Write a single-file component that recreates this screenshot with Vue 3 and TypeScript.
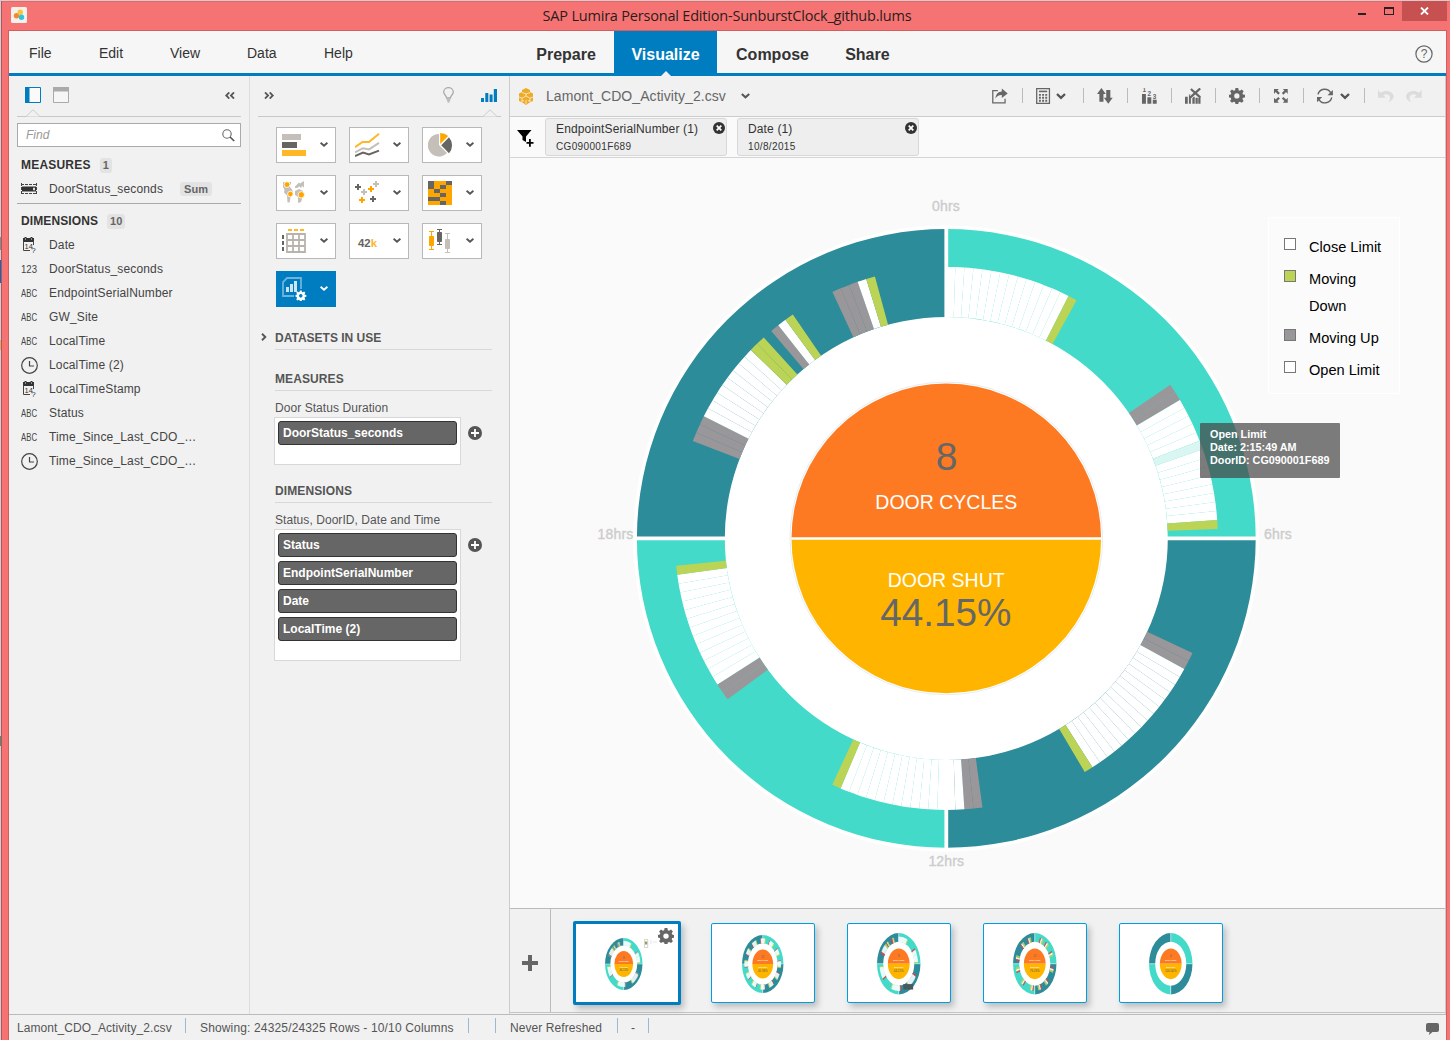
<script setup lang="ts">
type Part = [color: string, count: number]
interface Group { start: number; parts: Part[] }
interface Slice { d: string; fill: string }

const R_OUT = 309.4
const R_IN = 221.5
const R_EVENT = 271.5
const STEP = 1.911

const GRAY = '#999799'
const GREEN = '#bcd456'
const WHITE = '#ffffff'
const RED = '#d8474a'
const TEAL = '#43dac9'
const DEEP = '#2d8c9a'

function point(r: number, deg: number): string {
  const a = (deg * Math.PI) / 180
  return `${(r * Math.sin(a)).toFixed(2)} ${(-r * Math.cos(a)).toFixed(2)}`
}

function arc(r0: number, r1: number, from: number, to: number): string {
  return `M${point(r1, from)}A${r1} ${r1} 0 0 1 ${point(r1, to)}L${point(r0, to)}A${r0} ${r0} 0 0 0 ${point(r0, from)}Z`
}

function slices(groups: Group[]): Slice[] {
  const out: Slice[] = []
  for (const g of groups) {
    let a = g.start
    for (const [fill, count] of g.parts) {
      for (let i = 0; i < count; i++) {
        out.push({ d: arc(R_IN, R_EVENT, a, a + STEP), fill })
        a += STEP
      }
    }
  }
  return out
}

const quadrants: Slice[] = [TEAL, DEEP, TEAL, DEEP].map((fill, i) => ({
  d: arc(R_IN, R_OUT, i * 90, i * 90 + 90),
  fill,
}))

const dayGroups: Group[] = [
  { start: 0, parts: [[WHITE, 14], [GREEN, 1]] },
  { start: 55.55, parts: [[GRAY, 2], [WHITE, 5], ['#d9f6f2', 1], [WHITE, 8], [GREEN, 1]] },
  { start: 114.95, parts: [[GRAY, 2], [WHITE, 15], [GREEN, 1]] },
  { start: 172.35, parts: [[GRAY, 2], [WHITE, 14], [GREEN, 1]] },
  { start: 233.65, parts: [[GRAY, 2], [WHITE, 13], [GREEN, 1]] },
  { start: 291.0, parts: [[GRAY, 3], [WHITE, 9], [GREEN, 2]] },
  { start: 319.85, parts: [[GRAY, 1], [WHITE, 1], [GREEN, 1]] },
  { start: 335.2, parts: [[GRAY, 3], [WHITE, 1], [GREEN, 1]] },
]
const daySlices = slices(dayGroups)

const busy: Group[] = Array.from({ length: 12 }, (_, i) => ({
  start: i * 30 - 8,
  parts: [[RED, 1], [WHITE, 7], [GREEN, 1]] as Part[],
}))
const redDay: Group[] = dayGroups.map((g) => ({
  start: g.start,
  parts: g.parts.map(([c, n]): Part => [c === GRAY ? RED : c, n]),
}))
const stripes: Group[] = [16, 36, 62, 98, 132, 158, 184, 216, 250, 277, 312, 336].map((start) => ({
  start,
  parts: [[RED, 2], [WHITE, 2], [GREEN, 2]] as Part[],
}))

const thumbs = [
  { x: 29, y: 14, w: 37.5, h: 52, cycles: '8', shut: '44.15%', slices: daySlices },
  { x: 30, y: 11, w: 41.5, h: 58, cycles: '12', shut: '45.93%', slices: slices(busy) },
  { x: 29, y: 9, w: 43.5, h: 61.5, cycles: '8', shut: '44.15%', slices: slices(redDay) },
  { x: 29, y: 9, w: 43.5, h: 61.5, cycles: '12', shut: '76.26%', slices: slices(stripes) },
  { x: 29, y: 9, w: 43.5, h: 61.5, cycles: '0', shut: '100.00%', slices: [] as Slice[] },
]

const gearPath =
  'M6.6 0h2.8l.4 2.2 1.3.5 1.9-1.2 1.9 1.9-1.2 1.9.5 1.3 2.2.4v2.6l-2.2.4-.5 1.3 1.2 1.9-1.9 1.9-1.9-1.2-1.3.5-.4 2.2H6.6l-.4-2.2-1.3-.5L3 15.1l-1.9-1.9 1.2-1.9-.5-1.3L0 9.6V7l1.8-.4.5-1.3-1.2-1.9L3 1.5l1.9 1.2 1.3-.5zM8 5.4A2.7 2.7 0 1 0 8 10.8A2.7 2.7 0 1 0 8 5.4z'

const menus = ['File', 'Edit', 'View', 'Data', 'Help']
const rooms = ['Prepare', 'Visualize', 'Compose', 'Share']

const dimensions = [
  { kind: 'date', name: 'Date' },
  { kind: '123', name: 'DoorStatus_seconds' },
  { kind: 'ABC', name: 'EndpointSerialNumber' },
  { kind: 'ABC', name: 'GW_Site' },
  { kind: 'ABC', name: 'LocalTime' },
  { kind: 'time', name: 'LocalTime (2)' },
  { kind: 'date', name: 'LocalTimeStamp' },
  { kind: 'ABC', name: 'Status' },
  { kind: 'ABC', name: 'Time_Since_Last_CDO_…' },
  { kind: 'time', name: 'Time_Since_Last_CDO_…' },
]

const chartTypes: { id: string; art: string }[] = [
  { id: 'bar', art: '<path fill="#c4c0b9" d="M0 1h19v6H0z"/><path fill="#666561" d="M0 9h15v6H0z"/><path fill="#ffb627" d="M0 17h24v6H0z"/>' },
  { id: 'line', art: '<g fill="none" stroke-width="2"><path stroke="#ffb627" d="M0 14.3 7.5 9H14L24 .8"/><path stroke="#c4c0b9" d="M0 19.3 8 15.2 14 16.4 24 9.8"/><path stroke="#666561" d="M0 23 8 19.6 14 21.4 24 17.6"/></g>' },
  { id: 'pie', art: '<path fill="#c4c0b9" d="M11 1v11l8 8A11.2 11.2 0 1 1 11 1z"/><path fill="#ffa500" d="M12.2 0a12 12 0 0 1 8 3L12.2 11z"/><path fill="#666561" d="M21 4.2a12 12 0 0 1 0 16L13.2 12.2z"/>' },
  { id: 'map', art: '<path fill="#c4c0b9" d="M1 1h8v1.5l-1.5 3 2.5 3 1 3-2 3-1.5 7H5.5l-.5-7-3-3 .5-3L1 6zM13 5.5l4-4 1 1 4-2.5v6.5l-2-1.5-1 2-1.5-1.5L15 7h-2zM13 10l4-2 4 2v5l-2 6-3 1v-6l-3-2z"/><g fill="#ffa500" stroke="#fff" stroke-width=".8"><circle cx="5" cy="3.6" r="2.9"/><circle cx="8.4" cy="13" r="2.8"/><circle cx="19.3" cy="13.8" r="3.2"/></g>' },
  { id: 'scatter', art: '<g stroke-width="2"><path stroke="#666561" d="M0 6h6M3 3v6M15 18h6M18 15v6"/><path stroke="#c4c0b9" d="M18 3h6M21 0v6M6 11h6M9 8v6"/><path stroke="#ffa500" d="M13 8h6M16 5v6M4 19h6M7 16v6"/></g>' },
  { id: 'heat', art: '<path fill="#ffa500" d="M0 0h24v24H0z"/><path fill="#666561" d="M0 0h6v8H0zM18 0h6v4h-6zM12 4h6v4h-6zM6 8h6v4H6zM12 12h6v4h-6zM0 16h12v4H0zM12 20h6v4h-6z"/>' },
  { id: 'table', art: '<path fill="#ffb627" d="M6 0h4v2H6zM12 0h4v2h-4zM18 0h4v2h-4z"/><path fill="#666561" d="M0 6h2v4H0zM0 12h2v4H0zM0 18h2v4H0z"/><path fill="none" stroke="#b9b3ac" stroke-width="1.8" d="M5 5h18v18H5zM5 11h18M5 17h18M11 5v18M17 5v18"/>' },
  { id: 'number', art: '<text x="3" y="17.5" font-family="Liberation Sans,Arial,sans-serif" font-weight="bold" font-size="11" textLength="19" lengthAdjust="spacingAndGlyphs" fill="#666561">42<tspan fill="#ffb627">k</tspan></text>' },
  { id: 'box', art: '<g stroke-width="1"><g fill="#ffa500" stroke="#ffa500"><path d="M1 2.5h5M3.5 2.5v18M1 20.5h5"/><path d="M1.5 7.5h4v9h-4z"/></g><g fill="#666561" stroke="#666561"><path d="M9 .5h5M11.5.5v15M9 15.5h5"/><path d="M9.5 3.5h4v9h-4z"/></g><g fill="#c4c0b9" stroke="#c4c0b9"><path d="M17 4.5h5M19.5 4.5v19M17 23.5h5"/><path d="M17.5 10.5h4v9h-4z"/></g></g>' },
  { id: 'custom', art: `<path fill="none" stroke="#6db3dc" stroke-width="1.8" d="M12 19H1V5L5 1h14v11"/><path fill="#cde5f3" d="M4 10h3v5H4zM8 7h3v8H8zM12 4h3v11h-3z"/><g transform="translate(13.5,13.5) scale(.66)"><path fill="#fff" fill-rule="evenodd" d="${gearPath}"/></g>` },
]

const toolIcons: Record<string, string> = {
  share: '<path fill="none" stroke="#666" stroke-width="1.3" d="M6 2.7H.8v12.5h12.5V11"/><path fill="#666" d="M3.5 11C4 6 6.5 3.8 10 3.6V.5l6 5-6 4.8V7.2C7 7 5 8.2 3.5 11z"/>',
  calc: '<path fill="none" stroke="#666" stroke-width="1.3" d="M.7.7h13v15h-13z"/><path stroke="#666" stroke-width="1.6" d="M3 3.5h8.4"/><path stroke="#666" stroke-width="2" stroke-dasharray="2 1.2" d="M3 7h8.4M3 10h8.4M3 13h8.4"/>',
  sort: '<path fill="#666" d="M4.5 0 9 6H6.6v8H2.4V6H0zM11.5 16 16 10h-2.4V2H9.4v8H7z"/>',
  rank: '<path fill="#666" d="M1 6h4v10H1zM6.5 9.5h4V16h-4zM12 12h4v4h-4z"/><g fill="#666" font-family="Liberation Sans,Arial,sans-serif" font-size="6.5" font-weight="bold"><text x="1.5" y="4.5">1</text><text x="6.7" y="8">2</text><text x="12" y="11">3</text></g>',
  clear: '<path fill="#666" d="M0 9h2.8v7H0zM4 6.5h2V16H4zM7.5 9h2.4v7H7.5zM10.7 10H13v6h-2.3zM13.5 9h2.3v7h-2.3z"/><path stroke="#f1f1f1" stroke-width="4" d="M6 .5 15.5 9M15.5.5 6 9"/><path stroke="#666" stroke-width="2.3" d="M6 1 15.5 9.5M15.5.5 5.5 9.5"/>',
  gear: `<path fill="#666" fill-rule="evenodd" d="${gearPath}"/>`,
  expand: '<path fill="#666" d="M1 1h5L4.4 2.6 7 5.2 5.4 6.8 2.7 4.2 1 6zM15 1v5l-1.7-1.8-2.7 2.6L9 5.2l2.6-2.6L10 1zM1 15v-5l1.7 1.7 2.7-2.6L7 10.7l-2.6 2.6L6 15zM15 15h-5l1.6-1.7L9 10.7l1.6-1.6 2.7 2.6L15 10z"/>',
  refresh: '<path fill="none" stroke="#666" stroke-width="1.5" d="M1 6.5A7 7 0 0 1 14 5M15 9.5A7 7 0 0 1 2 11.5"/><path fill="#666" d="M16.2 2v5.5h-5.5zM0 14.5V9.2h5.3z"/>',
  undo: '<path fill="#dcdcdc" d="M0 2v8h8L5.3 7.3C9 5 12.5 7 12.3 10.5c0 1.7-1 3-2.3 4 4-1 6-3.5 6-6C15.5 3.5 8 1 2.8 4.8z"/>',
  redo: '<path fill="#dcdcdc" d="M16 2v8H8l2.7-2.7C7 5 3.5 7 3.7 10.5c0 1.7 1 3 2.3 4-4-1-6-3.5-6-6C.5 3.5 8 1 13.2 4.8z"/>',
}
const tools = [['share'], ['calc', 'menu'], ['sort'], ['rank'], ['clear'], ['gear'], ['expand'], ['refresh', 'menu'], ['undo', 'redo']]

const filters = [
  { name: 'EndpointSerialNumber', value: 'CG090001F689' },
  { name: 'Date', value: '10/8/2015' },
]
const legend = [
  { label: 'Close Limit', color: '#fff' },
  { label: 'Moving Down', color: GREEN },
  { label: 'Moving Up', color: GRAY },
  { label: 'Open Limit', color: '#fff' },
]
const dimensionPills = ['Status', 'EndpointSerialNumber', 'Date', 'LocalTime (2)']
</script>

<template>
  <div class="window">
    <header class="titlebar">
      <svg class="app-icon" width="16" height="16" viewBox="0 0 16 16">
        <rect width="16" height="16" rx="1.5" fill="#f4f0ec" />
        <circle cx="5.5" cy="8.8" r="2.7" fill="#ee8b32" />
        <circle cx="9.2" cy="5.3" r="2.7" fill="#f9c33c" />
        <circle cx="10.5" cy="10.2" r="2.7" fill="#2fc3dc" />
      </svg>
      <span class="title">SAP Lumira Personal Edition-SunburstClock_github.lums</span>
      <div class="win-buttons">
        <i class="minimize"></i>
        <i class="maximize"></i>
        <span class="close">
          <svg width="9" height="8" viewBox="0 0 9 8"><path d="M1 .5 8 7.5M8 .5 1 7.5" stroke="#fff" stroke-width="1.8" /></svg>
        </span>
      </div>
    </header>

    <div class="client">
      <nav class="menubar">
        <div class="menus"><span v-for="m in menus" :key="m" :class="m.toLowerCase()">{{ m }}</span></div>
        <div class="rooms">
          <span v-for="r in rooms" :key="r" :class="{ active: r === 'Visualize' }">{{ r }}</span>
        </div>
        <svg class="help-icon" width="18" height="18" viewBox="0 0 18 18">
          <circle cx="9" cy="9" r="8.1" fill="none" stroke="#666" stroke-width="1.2" />
          <text x="9" y="13.3" text-anchor="middle" font-size="12" fill="#666">?</text>
        </svg>
      </nav>

      <div class="body">
        <aside class="objects">
          <div class="panel-head">
            <svg width="16" height="16" viewBox="0 0 16 16"><path fill="#fafafa" stroke="#007cc0" d="M.5.5h15v15H.5z" /><path fill="#007cc0" d="M0 0h4.5v16H0z" /></svg>
            <svg class="second" width="16" height="16" viewBox="0 0 16 16"><path fill="#f6f6f6" stroke="#aaa" d="M.5.5h15v15H.5z" /><path fill="#aaa" d="M0 0h16v4.5H0z" /></svg>
            <svg class="collapse" width="10" height="7" viewBox="0 0 10 7"><path d="M4.3.4 1.2 3.5 4.3 6.6M9 .4 5.9 3.5 9 6.6" fill="none" stroke="#555" stroke-width="1.8" /></svg>
            <svg class="notch" width="14" height="8" viewBox="0 0 14 8"><path d="M0 7.5 7 .8 14 7.5" fill="#f1f1f1" stroke="#ccc" /></svg>
          </div>
          <div class="search">
            <em>Find</em>
            <svg width="13" height="13" viewBox="0 0 13 13"><circle cx="5" cy="5" r="4.2" fill="none" stroke="#666" stroke-width="1.1" /><path d="M8 8 12.2 12" stroke="#555" stroke-width="1.7" /></svg>
          </div>
          <h3 class="first">MEASURES <b>1</b></h3>
          <div class="row measure">
            <svg width="16" height="12" viewBox="0 0 16 12"><path d="M0 1.5h16M0 10.5h16M.5 0v12M15.5 0v12" stroke="#444" stroke-dasharray="3 1" /><path fill="#333" d="M1 3.5h14v5H1z" /><path fill="#ddd" d="M12 4.8h2v2.4h-2z" /></svg>
            <span>DoorStatus_seconds</span><small>Sum</small>
          </div>
          <h3>DIMENSIONS <b>10</b></h3>
          <div v-for="(d, i) in dimensions" :key="i" class="row">
            <svg v-if="d.kind === 'date'" width="16" height="16" viewBox="0 0 16 16">
              <path fill="#333" d="M2 1h11v4H2zM3.5 0h2v2h-2zM9.5 0h2v2h-2z" /><path fill="#eee" d="M4 1.5h1v1H4zM10 1.5h1v1h-1z" />
              <path fill="none" stroke="#444" d="M2.5 4v9.5H9M12.5 4v4" />
              <text x="3.5" y="12" font-size="7.5" fill="#333">14</text>
              <text x="10.3" y="15.5" font-size="8" fill="#333">?</text>
            </svg>
            <svg v-else-if="d.kind === 'time'" width="17" height="17" viewBox="0 0 17 17" class="clock">
              <circle cx="8.5" cy="8.5" r="7.8" fill="none" stroke="#444" stroke-width="1.2" /><path d="M8.5 4v5H13" fill="none" stroke="#444" stroke-width="1.2" />
            </svg>
            <svg v-else class="kind" width="28" height="20" viewBox="0 -4 28 20">
              <text x="0" y="10" font-size="11" fill="#444" textLength="16" lengthAdjust="spacingAndGlyphs">{{ d.kind }}</text>
            </svg>
            <span>{{ d.name }}</span>
          </div>
        </aside>

        <aside class="builder">
          <div class="panel-head">
            <svg class="expand" width="10" height="7" viewBox="0 0 10 7"><path d="M1 .4 4.1 3.5 1 6.6M5.7.4 8.8 3.5 5.7 6.6" fill="none" stroke="#555" stroke-width="1.8" /></svg>
            <svg class="bulb" width="11" height="16" viewBox="0 0 11 16"><path d="M3.6 11C3.6 8.5.7 8 .7 5a4.8 4.4 0 0 1 9.6 0C10.3 8 7.4 8.5 7.4 11zM3.8 13h3.4M4.5 14.9h2" fill="none" stroke="#aaa" stroke-width="1.3" /></svg>
            <svg width="16" height="13" viewBox="0 0 16 13"><path fill="#007cc0" d="M0 9h3v4H0zM4.3 4h3v9h-3zM8.6 5.5h3V13h-3zM12.8 0H16v13h-3.2z" /></svg>
            <svg class="notch" width="14" height="8" viewBox="0 0 14 8"><path d="M0 7.5 7 .8 14 7.5" fill="#f1f1f1" stroke="#ccc" /></svg>
          </div>
          <div class="types">
            <div v-for="t in chartTypes" :key="t.id" class="type" :class="t.id">
              <svg class="art" width="25" height="24" viewBox="0 0 25 24" v-html="t.art"></svg>
              <svg class="chev" width="8" height="5" viewBox="0 0 8 5"><path d="M.6.8 4 3.7 7.4.8" fill="none" stroke="currentColor" stroke-width="1.9" /></svg>
            </div>
          </div>
          <h4 class="datasets">
            <svg width="6" height="8" viewBox="0 0 6 8"><path d="M1 .8 4.3 4 1 7.2" fill="none" stroke="#555" stroke-width="1.9" /></svg>DATASETS IN USE
          </h4>
          <h4 class="sec-measures">MEASURES</h4>
          <p>Door Status Duration</p>
          <div class="feed">
            <div class="shelf one"><div class="pill">DoorStatus_seconds</div></div>
            <svg width="14" height="14" viewBox="0 0 14 14"><circle cx="7" cy="7" r="7" fill="#555" /><path d="M3 7h8M7 3v8" stroke="#fff" stroke-width="1.8" /></svg>
          </div>
          <h4 class="sec-dimensions">DIMENSIONS</h4>
          <p>Status, DoorID, Date and Time</p>
          <div class="feed">
            <div class="shelf many"><div v-for="p in dimensionPills" :key="p" class="pill">{{ p }}</div></div>
            <svg width="14" height="14" viewBox="0 0 14 14"><circle cx="7" cy="7" r="7" fill="#555" /><path d="M3 7h8M7 3v8" stroke="#fff" stroke-width="1.8" /></svg>
          </div>
        </aside>

        <main class="stage">
          <div class="toolbar">
            <svg width="16" height="17" viewBox="0 0 16 17" class="cube">
              <path fill="#eeab27" d="M8 0 12 2v2l3 1.5v7.5l-3 1.2L8 17l-4-2.8L1 13V5.5L4 4V2z" /><path d="M4 4.5 8 6l4-1.5M1 9l3 1.2L8 8l4 2.2L15 9M4 10.2V14M12 10.2V14M8 6v2M8 12v4M4 12.8h2M10 12.8h2" fill="none" stroke="#f8e9c9" stroke-width=".9" />
            </svg>
            <span class="dataset">Lamont_CDO_Activity_2.csv</span>
            <svg width="9" height="6" viewBox="0 0 9 6"><path d="M.8 1 4.5 4.3 8.2 1" fill="none" stroke="#555" stroke-width="2" /></svg>
            <div class="tools">
              <div v-for="(group, gi) in tools" :key="gi" class="tool" :class="group[0]">
                <template v-for="name in group" :key="name">
                  <svg v-if="name === 'menu'" class="tool-menu" width="10" height="7" viewBox="0 0 10 7"><path d="M1 1 5 4.8 9 1" fill="none" stroke="#555" stroke-width="2.4" /></svg>
                  <svg v-else width="16" height="16" viewBox="0 0 16.3 16.3" v-html="toolIcons[name]"></svg>
                </template>
              </div>
            </div>
          </div>

          <div class="filterbar">
            <svg width="17" height="17" viewBox="0 0 17 17"><path fill="#000" d="M0 0h14.5L9 6.5V12L5.5 10V6.5zM12 9h1.8v3H16.500v1.800h-2.700v3H12v-3H9.500V12H12z" /></svg>
            <div v-for="f in filters" :key="f.name" class="chip">
              <div class="chip-name">{{ f.name }} (1)</div>
              <div class="chip-value">{{ f.value }}</div>
              <svg width="12" height="12" viewBox="0 0 12 12"><circle cx="6" cy="6" r="6" fill="#333" /><path d="M3.7 3.7l4.6 4.6M8.3 3.7 3.7 8.3" stroke="#fff" stroke-width="1.8" /></svg>
            </div>
          </div>

          <div class="canvas">
            <svg width="935" height="750" viewBox="510 158 935 750">
              <g transform="translate(946.3 538.4)">
                <circle r="313" fill="#fff" />
                <path v-for="(q, i) in quadrants" :key="i" :d="q.d" :fill="q.fill" />
                <path d="M-313 0H313M0-313V313" stroke="#fff" stroke-width="3.8" />
                <path v-for="(s, i) in daySlices" :key="'s' + i" :d="s.d" :fill="s.fill" />
                <circle r="156.3" fill="none" stroke="#dfe9ec" stroke-width=".8" />
                <path fill="#fd7a22" d="M-154.8 0A154.8 154.8 0 0 1 154.8 0z" />
                <path fill="#ffb500" d="M-154.8 0A154.8 154.8 0 0 0 154.8 0z" />
                <path d="M-155 .1H155" stroke="#fff" stroke-width="2.4" />
              </g>
              <g text-anchor="middle">
                <g class="hours"><text x="946" y="211">0hrs</text><text x="1278" y="539">6hrs</text><text x="946.3" y="866">12hrs</text><text x="615.5" y="539">18hrs</text></g>
                <g fill="#666"><text x="946.5" y="469.5" font-size="39">8</text><text x="945.8" y="626" font-size="38.7">44.15%</text></g>
                <g fill="#fff" font-size="19.5"><text x="946.3" y="509">DOOR CYCLES</text><text x="946.2" y="587">DOOR SHUT</text></g>
              </g>
            </svg>
            <div class="legend">
              <div v-for="l in legend" :key="l.label" class="entry"><i :style="{ background: l.color }"></i><span>{{ l.label }}</span></div>
            </div>
            <div class="tooltip">Open Limit<br />Date: 2:15:49 AM<br />DoorID: CG090001F689</div>
          </div>

          <div class="filmstrip">
            <div class="add"><svg width="16" height="16" viewBox="0 0 16 16"><path d="M0 8h16M8 0v16" stroke="#666" stroke-width="4" /></svg></div>
            <div v-for="(t, i) in thumbs" :key="i" class="thumb" :class="{ current: i === 0 }">
              <svg :width="t.w" :height="t.h" viewBox="-310 -310 620 620" preserveAspectRatio="none" :style="{ marginLeft: t.x + 'px', marginTop: t.y + 'px' }">
                <circle r="309" fill="#fff" />
                <path v-for="(q, k) in quadrants" :key="k" :d="q.d" :fill="q.fill" />
                <path d="M-313 0H313M0-313V313" stroke="#fff" stroke-width="6" />
                <path v-for="(s, k) in t.slices" :key="'s' + k" :d="s.d" :fill="s.fill" :stroke="s.fill" stroke-width="3" />
                <path fill="#fd7a22" d="M-155 0A155 155 0 0 1 155 0z" /><path fill="#ffb500" d="M-155 0A155 155 0 0 0 155 0z" />
                <g text-anchor="middle"><text y="-65" font-size="42" fill="#666">{{ t.cycles }}</text><text y="88" font-size="42" fill="#555">{{ t.shut }}</text>
                  <g fill="#fff" font-size="22" font-weight="bold"><text y="-29">DOOR CYCLES</text><text y="48">DOOR SHUT</text></g></g>
                <rect v-if="i === 2" x="65" y="205" width="140" height="55" fill="#47595c" />
              </svg>
              <template v-if="i === 0">
                <svg class="mini-legend" width="14" height="10" viewBox="0 0 14 10"><path fill="#fff" stroke="#bbb" stroke-width=".6" d="M.5 1.5h3.2v8H.5z" /><path fill="#93a05a" d="M1 3.5h2.2v3H1z" /><path stroke="#ddd" d="M7 2v4M9 4h4" stroke-width=".8" /></svg>
                <svg class="thumb-gear" width="16" height="16" viewBox="0 0 16 16"><path fill="#666" fill-rule="evenodd" :d="gearPath" /></svg>
              </template>
            </div>
          </div>
        </main>
      </div>

      <footer class="status">
        <span class="s1">Lamont_CDO_Activity_2.csv</span><i></i>
        <span class="s2">Showing: 24325/24325 Rows - 10/10 Columns</span><i></i><i class="empty"></i>
        <span class="s3">Never Refreshed</span><i></i>
        <span class="s4">-</span><i></i>
        <svg width="13" height="12" viewBox="0 0 13 12"><path fill="#666" d="M2 0h9q2 0 2 2v5q0 2-2 2H6.5L3 12l.5-3H2Q0 9 0 7V2q0-2 2-2z" /></svg>
      </footer>
    </div>
  </div>
</template>

<style>
body { margin: 0; overflow: hidden; }
</style>

<style scoped>
* { box-sizing: border-box; }
svg { display: block; flex: none; }
.window {
  width: 1450px; height: 1040px; overflow: hidden; background: #f57473;
  border-top: 1px solid #bd5556; border-left: 1px solid;
  border-image: linear-gradient(#dcc9cd 0 237px, #8a8a8a 237px 250px, #dcc9cd 250px 260px, #1268b8 260px 283px, #dcc9cd 283px 340px, #e8a860 340px 350px, #dcc9cd 350px 735px, #5a8a70 735px 745px, #dcc9cd 745px) 1;
  box-shadow: inset 1px 0 #a85a5e, inset 0 1px #e06a6a;
  font-family: "Liberation Sans", Arial, sans-serif; color: #333;
  display: flex; flex-direction: column;
}
.titlebar { height: 29px; flex: none; display: flex; position: relative; box-shadow: 0 -1px #bd5556; }
.app-icon { margin: 6px 0 0 10px; }
.title {
  flex: 1; text-align: center; padding-left: 72px; line-height: 29px; font-family: "Open Sans", "Noto Sans", sans-serif;
  font-size: 14.5px; letter-spacing: -.2px; color: #2b1c1c; white-space: nowrap;
}
.win-buttons { display: flex; width: 95px; align-items: flex-start; }
.minimize { width: 8px; height: 2px; background: #222; margin: 12px 18px 0 3px; }
.maximize { width: 10px; height: 8px; border: 1px solid #222; border-top-width: 2px; margin: 6px 8px 0 0; }
.close { width: 45px; height: 20px; background: #c75050; display: flex; align-items: center; justify-content: center; }
.client { margin: 0 3px 0 7px; border: 1px solid #d15f60; border-bottom: 0; height: 1010px; background: #f1f1f1; display: flex; flex-direction: column; }
.menubar { height: 45px; flex: none; background: #f6f6f6; border-bottom: 3px solid #007cc0; display: flex; position: relative; }
.menus { width: 509.2px; display: flex; padding-left: 20px; font-size: 14px; line-height: 44px; }
.menus .file { width: 70px; } .menus .edit { width: 71px; } .menus .view { width: 77px; } .menus .data { width: 77px; }
.rooms { display: flex; font-size: 16px; font-weight: bold; line-height: 47px; }
.rooms span { padding: 0 18.1px; position: relative; height: 42px; }
.rooms .active { background: #007cc0; color: #fff; padding: 0 17.5px; margin-right: .8px; }
.rooms .active::after { content: ""; position: absolute; left: 50%; bottom: -3px; margin-left: -5px; border: 5px solid transparent; border-top: 0; border-bottom-color: #f1f1f1; }
.help-icon { margin: 14px 13px 0 auto; }
.body { flex: 1; display: flex; min-height: 0; }
.panel-head { height: 41px; display: flex; align-items: center; position: relative; border-bottom: 1px solid #c8c8c8; }
.objects { width: 241px; border-right: 1px solid #ddd; padding: 0 8px; }
.objects .panel-head { padding: 0 6px 2px 8px; }
.second { margin-left: 12px; }
.collapse { margin-left: auto; }
.notch { position: absolute; bottom: -1px; left: 9px; }
.search { height: 24px; margin-top: 6px; border: 1px solid #aaa; background: #fff; display: flex; align-items: center; justify-content: space-between; padding: 0 5px 0 8px; font-size: 12px; color: #999; }
h3 { margin: 0; padding-left: 4px; height: 24px; line-height: 24px; font-size: 12px; letter-spacing: .1px; display: flex; align-items: center; }
h3.first { margin-top: 6px; letter-spacing: .2px; }
h3 b { background: #e3e3e3; border-radius: 3px; color: #666; font-size: 11px; padding: 0 3px; line-height: 15px; margin-left: 9px; letter-spacing: 0; }
h3.first + .row { height: 27px; border-bottom: 1px solid #aaa; padding-bottom: 3px; margin-bottom: 5px; }
.row { height: 24px; display: flex; align-items: center; padding-left: 4px; font-size: 12px; letter-spacing: .15px; color: #444; }
.row svg { margin-right: 12px; }
.row .clock { margin-right: 11px; }
.row .kind { margin-right: 0; letter-spacing: 0; }
.row small { margin-left: 17px; background: #e3e3e3; color: #666; font-weight: bold; font-size: 11px; line-height: 14px; padding: 0 4px; border-radius: 3px; letter-spacing: .1px; }
.builder { width: 260px; border-right: 1px solid #ccc; color: #555; }
.builder .panel-head { margin-left: 8px; margin-right: 8px; padding: 0 4px 2px 6px; }
.builder .panel-head .notch { left: auto; right: 4px; }
.bulb { margin: 0 27px 0 auto; }
.types { margin: 10px 0 0 26px; width: 206px; display: grid; grid-template-columns: repeat(3, 60px); gap: 12px 13px; }
.type { height: 36px; border: 1px solid #b8b8b8; background: #fff; display: flex; color: #555; }
.type .art { margin: 5px 0 0 5px; }
.type .chev { margin: 14px 0 0 13px; }
.type.custom { background: #007cc0; border-color: #007cc0; color: #fff; }
h4 { margin: 0 17px 0 25px; font-size: 12px; line-height: 22px; height: 23px; border-bottom: 1px solid #d8d8d8; position: relative; }
h4.datasets { margin-top: 20px; }
h4.datasets svg { position: absolute; left: -14px; top: 6px; }
h4.sec-measures { margin-top: 18px; letter-spacing: .1px; }
h4.sec-dimensions { margin-top: 15px; letter-spacing: .1px; }
.builder p { margin: 9px 0 1px 25px; font-size: 12px; line-height: 16px; letter-spacing: .06px; }
.feed { display: flex; padding-left: 24px; }
.feed > svg { margin: 9px 0 0 7px; }
.shelf { width: 187px; background: #fff; border: 1px solid #d8d8d8; padding: 3px; display: flex; flex-direction: column; gap: 4px; }
.shelf.one { height: 48px; } .shelf.many { height: 132px; }
.pill { height: 24px; flex: none; width: 179px; background: #666; border: 1px solid #333; border-radius: 3px; color: #fff; font-size: 12px; font-weight: bold; line-height: 22px; padding-left: 4px; }
.stage { flex: 1; display: flex; flex-direction: column; min-width: 0; border-right: 1px solid #ccc; }
.toolbar { height: 41px; flex: none; border-bottom: 1px solid #ccc; display: flex; align-items: center; padding: 0 23.5px 0 8px; }
.dataset { font-size: 14px; letter-spacing: .07px; color: #666; margin: 0 15px 0 12px; }
.tools { margin-left: auto; display: flex; align-items: center; }
.tool { display: flex; align-items: center; }
.tool:not(:last-child)::after { content: ""; width: 1px; height: 15px; background: #bbb; margin: 0 13px 0 14px; align-self: flex-start; }
.tool:last-child { gap: 12px; }
.tool-menu { margin-left: 4px; margin-right: 3px; }
.refresh .tool-menu { margin-left: 7px; margin-right: 0; }
.filterbar { height: 41px; flex: none; border-bottom: 1px solid #d5d5d5; background: #fafafa; display: flex; padding: 1px 0 0 7px; }
.filterbar > svg { margin: 12px 11px 0 0; }
.chip { width: 182px; height: 38px; margin-right: 10px; background: #eee; border: 1px solid #d8d8d8; border-radius: 3px; position: relative; padding: 3px 0 0 10px; }
.chip-name { font-size: 12px; line-height: 15px; letter-spacing: .14px; }
.chip-value { font-size: 10px; line-height: 13px; margin-top: 3px; letter-spacing: .35px; }
.chip svg { position: absolute; right: 1px; top: 3px; }
.canvas { height: 750px; flex: none; background: #fafafa; position: relative; }
.hours text { font-size: 14px; letter-spacing: .15px; fill: #ccc; stroke: #ccc; stroke-width: .35px; }
.legend { position: absolute; left: 758px; top: 59px; width: 132px; height: 177px; border: 1px solid #fff; background: #fbfbfb; padding: 16px 15px 14px; display: flex; flex-direction: column; gap: 5px; font-size: 14.6px; line-height: 27px; color: #000; }
.entry { display: flex; }
.entry i { width: 12px; height: 12px; flex: none; border: 1px solid #777; margin: 4px 13px 0 0; }
.entry span { width: 76px; }
.tooltip { position: absolute; left: 690px; top: 265px; width: 140px; height: 55px; background: rgba(71, 71, 71, .71); color: #fff; font-size: 10.8px; font-weight: bold; line-height: 13px; padding: 5px 0 0 10px; white-space: nowrap; border-radius: 1px; }
.filmstrip { height: 105px; flex: none; border-top: 1px solid #bbb; border-bottom: 1px solid #c4c4c4; display: flex; }
.add { width: 41px; border-right: 1px solid #bbb; display: flex; align-items: center; justify-content: center; padding-top: 5px; margin-right: 22px; }
.thumb { width: 104px; height: 80px; margin: 14px 32px 0 0; border: 1px solid #009de0; border-radius: 2px; background: #fff; box-shadow: 3px 4px 6px rgba(0, 0, 0, .22); position: relative; flex: none; }
.thumb.current { width: 108px; height: 84px; margin: 12px 30px 0 0; border: 3px solid #007cc0; }
.thumb-gear { position: absolute; right: 4px; top: 4px; }
.mini-legend { position: absolute; left: 68px; top: 14px; }
.status { height: 26px; flex: none; border-top: 1px solid #bbb; display: flex; font-size: 12px; line-height: 26px; color: #555; padding-left: 8px; letter-spacing: .08px; white-space: nowrap; }
.status i { width: 1px; height: 15px; background: #9db8cf; margin-top: 3px; }
.status .s1 { width: 168px; } .status .s2 { width: 282px; padding-left: 14px; letter-spacing: .15px; }
.status .empty { margin-left: 26px; }
.status .s3 { width: 121px; padding-left: 14px; } .status .s4 { width: 30px; padding-left: 13px; }
.status svg { margin: 8px 7px 0 auto; }
</style>
